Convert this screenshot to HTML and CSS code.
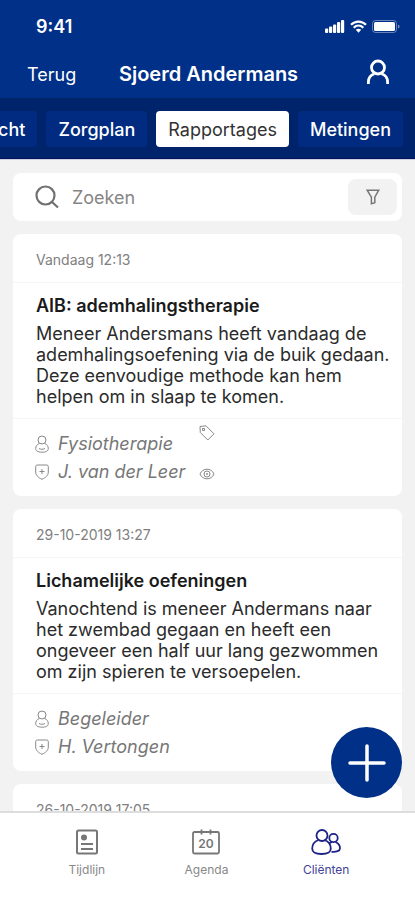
FILE: index.html
```html
<!DOCTYPE html>
<html lang="nl">
  <head>
    <title>Rapportages</title>
    <meta charset="UTF-8">
    <meta name="viewport" content="width=device-width,initial-scale=1">
    <link rel="stylesheet" href="styles.css">
  </head>
  <body>
    <!-- shared icons -->
    <svg class="defs" width="0" height="0">
      <symbol id="person" viewBox="0 0 14 18">
        <circle cx="7" cy="5" r="4"/>
        <path d="M4.3 8.5C2 9.4.7 11.200.7 13.600.7 15.800 2.800 17.200 7 17.200s6.300-1.400 6.300-3.600c0-2.400-1.300-4.200-3.600-5.100M4 13.500c1.800 1 4.200 1 6 0"/>
      </symbol>
      <symbol id="shield" viewBox="0 0 14 16">
        <path d="M2.300 1h9.400q1.600 0 1.600 1.600V8c0 3.400-2.700 5.700-6.300 7.300C3.400 13.700.7 11.400.7 8V2.600Q.7 1 2.300 1zM7 5v5M4.500 7.500h5"/>
      </symbol>
    </svg>

    <div class="app">
      <header class="header">
        <div class="status">
          <span class="clock">9:41</span>
          <div class="status_icons">
            <svg width="20" height="13" viewBox="0 0 20 13" fill="#fff">
              <rect x="0" y="8.500" width="3.200" height="4.500" rx="1"/>
              <rect x="4" y="6.500" width="3.200" height="6.500" rx="1"/>
              <rect x="8" y="4.500" width="3.200" height="8.500" rx="1"/>
              <rect x="12" y="2" width="3.200" height="11" rx="1"/>
              <rect x="16" y="0" width="3.200" height="13" rx="1"/>
            </svg>
            <svg width="17" height="13" viewBox="0 0 17 13" fill="none" stroke="#fff" stroke-width="2.200">
              <path d="M1 4.800c4.300-4.300 10.700-4.300 15 0M3.700 7.700c2.800-2.800 6.800-2.800 9.600 0"/>
              <path d="M5.800 9.800c1.600-1.500 3.800-1.500 5.400 0L8.500 12.700z" fill="#fff" stroke="none"/>
            </svg>
            <svg width="28" height="13" viewBox="0 0 28 13">
              <rect x=".5" y=".5" width="24" height="12" rx="3" fill="none" stroke="#fff" stroke-opacity=".4"/>
              <rect x="2" y="2" width="21" height="9" rx="1.500" fill="#fff"/>
              <path d="M26 4.500v4q1.500-.6 1.500-2t-1.500-2z" fill="#fff" fill-opacity=".5"/>
            </svg>
          </div>
        </div>
        <div class="title_bar">
          <a class="back" href="#">Terug</a>
          <h1 class="client">Sjoerd Andermans</h1>
          <button class="profile" aria-label="Profiel">
            <svg width="24" height="25" viewBox="0 0 24 25" fill="none" stroke="#fff" stroke-width="2.800">
              <circle cx="12" cy="8.500" r="6.500"/>
              <path d="M2.400 25v-2c0-4 2.600-7 6.100-8.200M21.600 25v-2c0-4-2.600-7-6.100-8.200"/>
            </svg>
          </button>
        </div>
      </header>

      <nav class="tabs">
        <button class="tab">Overzicht</button>
        <button class="tab">Zorgplan</button>
        <button class="tab active">Rapportages</button>
        <button class="tab">Metingen</button>
      </nav>

      <main class="content">
        <div class="search">
          <label class="search_label" for="zoeken" aria-label="Zoeken">
            <svg width="24" height="24" viewBox="0 0 24 24" fill="none" stroke="#707070" stroke-width="2.200">
              <circle cx="10.500" cy="10.500" r="9"/>
              <path d="M17 17l6 5.500"/>
            </svg>
          </label>
          <input class="search_input" id="zoeken" type="text" placeholder="Zoeken">
          <button class="filter" aria-label="Filter">
            <svg width="14" height="16" viewBox="0 0 14 16" fill="none" stroke="#777" stroke-width="1.500">
              <path d="M1.200 1.200h11.600L8.800 8.200v5.600l-3.400 1V8.200z"/>
            </svg>
          </button>
        </div>

        <article class="card">
          <div class="date">Vandaag 12:13</div>
          <div class="report">
            <h2 class="report_title">AIB: ademhalingstherapie</h2>
            <p class="report_text">Meneer Andersmans heeft vandaag de ademhalingsoefening via de buik gedaan. Deze eenvoudige methode kan hem helpen om in slaap te komen.</p>
          </div>
          <div class="meta">
            <div class="people">
              <div class="person"><svg class="icon" width="14" height="18"><use href="#person"/></svg>Fysiotherapie</div>
              <div class="person"><svg class="icon" width="14" height="16"><use href="#shield"/></svg>J. van der Leer</div>
            </div>
            <div class="marks">
              <svg class="icon" width="16" height="16" viewBox="0 0 16 16">
                <path d="M1 1.500l6-.7 8 8-6.200 6.200L1.300 7.500zM3.500 3.500h2v2h-2z"/>
              </svg>
              <svg class="icon" width="16" height="12" viewBox="0 0 16 12">
                <path d="M1 6c2.500-6.400 11.500-6.400 14 0-2.500 6.400-11.500 6.400-14 0z"/>
                <circle cx="8" cy="6" r="3"/>
                <circle cx="8" cy="6" r=".6"/>
              </svg>
            </div>
          </div>
        </article>

        <article class="card">
          <div class="date">29-10-2019 13:27</div>
          <div class="report">
            <h2 class="report_title">Lichamelijke oefeningen</h2>
            <p class="report_text">Vanochtend is meneer Andermans naar het zwembad gegaan en heeft een ongeveer een half uur lang gezwommen om zijn spieren te versoepelen.</p>
          </div>
          <div class="meta">
            <div class="people">
              <div class="person"><svg class="icon" width="14" height="18"><use href="#person"/></svg>Begeleider</div>
              <div class="person"><svg class="icon" width="14" height="16"><use href="#shield"/></svg>H. Vertongen</div>
            </div>
          </div>
        </article>

        <article class="card">
          <div class="date">26-10-2019 17:05</div>
        </article>

        <button class="add" aria-label="Rapportage toevoegen">
          <svg width="38" height="38" viewBox="0 0 38 38" stroke="#fff" stroke-width="3.500" stroke-linecap="round">
            <path d="M19 2v34M2 19h34"/>
          </svg>
        </button>
      </main>

      <nav class="bottom">
        <a class="bottom_item" href="#">
          <svg width="30" height="28" viewBox="0 0 30 28" fill="none" stroke="#777" stroke-width="2">
            <rect x="5" y="2.500" width="20" height="23" rx="1.500"/>
            <circle cx="12" cy="9.500" r="3" fill="#777" stroke="none"/>
            <path d="M9 16h12M9 21h12"/>
          </svg>
          Tijdlijn
        </a>
        <a class="bottom_item" href="#">
          <svg width="30" height="28" viewBox="0 0 30 28" fill="none" stroke="#777" stroke-width="1.800">
            <rect x="2" y="4" width="26" height="21.500" rx="1.500"/>
            <path d="M10.500 1.500v5M19.500 1.500v5"/>
            <text class="day" x="15" y="19.500">20</text>
          </svg>
          Agenda
        </a>
        <a class="bottom_item active" href="#">
          <svg width="30" height="28" viewBox="0 0 30 28" fill="none" stroke="#1c2287" stroke-width="1.800">
            <circle cx="11" cy="7.500" r="5.500"/>
            <path d="M7.500 12C3.500 13.500 1.200 17 1.200 20.500c0 3.600 3.600 5.500 9.300 5.500s9.300-1.900 9.300-5.500c0-3.500-2.300-7-6.300-8.500"/>
            <circle cx="22.500" cy="10" r="4.200"/>
            <path d="M24.500 14c2.800 1.200 4.500 3.800 4.500 6.200 0 2.800-3.500 4-8.500 3.600M21 14l-3.200 1.300"/>
          </svg>
          Cliënten
        </a>
      </nav>
    </div>
  </body>
</html>
```
FILE: styles.css
```css
*
{
  box-sizing: border-box;
}
body
{
  margin: 0;
  font-family: Inter, "Liberation Sans", sans-serif;
  font-size: 18px;
  color: #2b2b2b;
}
button
{
  border: 0;
  padding: 0;
  font: inherit;
  cursor: pointer;
}
a
{
  text-decoration: none;
}
svg
{
  display: block;
  flex: none;
}
.defs
{
  position: absolute;
}
.app
{
  display: flex;
  flex-direction: column;
  height: 100vh;
  overflow: hidden;
}

/* header */
.header
{
  background: #003087;
  color: white;
}
.status
{
  display: flex;
  justify-content: space-between;
  align-items: center;
  height: 50px;
  padding: 2px 15px 0 36px;
}
.clock
{
  font-weight: 600;
}
.status_icons
{
  display: flex;
  gap: 5px;
}
.title_bar
{
  display: grid;
  grid-template-columns: 1fr auto 1fr;
  align-items: center;
  height: 48px;
  padding: 0 25px 0 27px;
}
.back
{
  color: white;
}
.client
{
  margin: 0;
  font-size: 20px;
  font-weight: 600;
}
.profile
{
  justify-self: end;
  padding-bottom: 6px;
  background: none;
}

/* tabs run off the left edge */
.tabs
{
  display: flex;
  justify-content: flex-end;
  gap: 9px;
  padding: 13px 12px 11px;
  overflow: hidden;
  background: #00246c;
  border-bottom: 1px solid #00145c;
}
.tab
{
  flex: none;
  height: 36px;
  padding: 0 12px;
  border-radius: 4px;
  background: #002b80;
  color: white;
  font-weight: 500;
}
.tab.active
{
  background: white;
  color: #333;
  font-weight: 400;
}

/* content */
.content
{
  position: relative;
  flex: 1;
  min-height: 0;
  display: flex;
  flex-direction: column;
  gap: 13px;
  padding: 13px 13px 0;
  overflow: hidden;
  background: #f2f2f2;
  border-top: 1px solid #cfcfe4;
}
.search
{
  flex: none;
  display: flex;
  align-items: center;
  height: 48px;
  padding: 0 5px 0 22px;
  border-radius: 8px;
  background: white;
}
.search_input
{
  flex: 1;
  min-width: 0;
  border: 0;
  padding: 0 13px;
  background: none;
  font: inherit;
  color: #222;
}
.search_input::placeholder
{
  color: #858585;
  opacity: 1;
}
.filter
{
  display: flex;
  justify-content: center;
  align-items: center;
  width: 49px;
  height: 36px;
  border-radius: 8px;
  background: #f2f2f2;
}
.card
{
  flex: none;
  border-radius: 8px;
  background: white;
}
.date
{
  padding: 3px 23px 0;
  font-size: 14px;
  line-height: 45px;
  color: #808080;
}
.report
{
  padding: 12px 10px 11px 23px;
  border-top: 1px solid #f5f5f5;
  border-bottom: 1px solid #f5f5f5;
}
.report_title
{
  margin: 0 0 6px;
  font-size: 18px;
  font-weight: 600;
  line-height: 22px;
  color: #1a1a1a;
}
.report_text
{
  margin: 0;
  line-height: 21px;
}
.meta
{
  display: flex;
  gap: 14px;
  padding: 6px 22px 10px;
}
.people
{
  padding-top: 5px;
}
.person
{
  display: flex;
  align-items: center;
  gap: 9px;
  line-height: 28px;
  font-style: italic;
  color: #777;
}
.marks
{
  display: flex;
  flex-direction: column;
  justify-content: space-between;
  padding-bottom: 6px;
}
.icon
{
  fill: none;
  stroke: #888;
  stroke-width: 1;
}
.add
{
  position: absolute;
  right: 13px;
  bottom: 13px;
  display: flex;
  justify-content: center;
  align-items: center;
  width: 71px;
  height: 71px;
  border-radius: 50%;
  background: #003087;
}

/* bottom bar */
.bottom
{
  display: grid;
  grid-template-columns: repeat(3, 1fr);
  height: 89px;
  padding: 15px 29px 0 27px;
  border-top: 2px solid #ddd;
  background: white;
}
.bottom_item
{
  display: flex;
  flex-direction: column;
  align-items: center;
  gap: 6px;
  font-size: 12px;
  line-height: 16px;
  color: #888;
}
.bottom_item.active
{
  color: #3f4499;
}
.day
{
  font-size: 12px;
  font-weight: 600;
  text-anchor: middle;
  fill: #777;
  stroke: none;
}
```
